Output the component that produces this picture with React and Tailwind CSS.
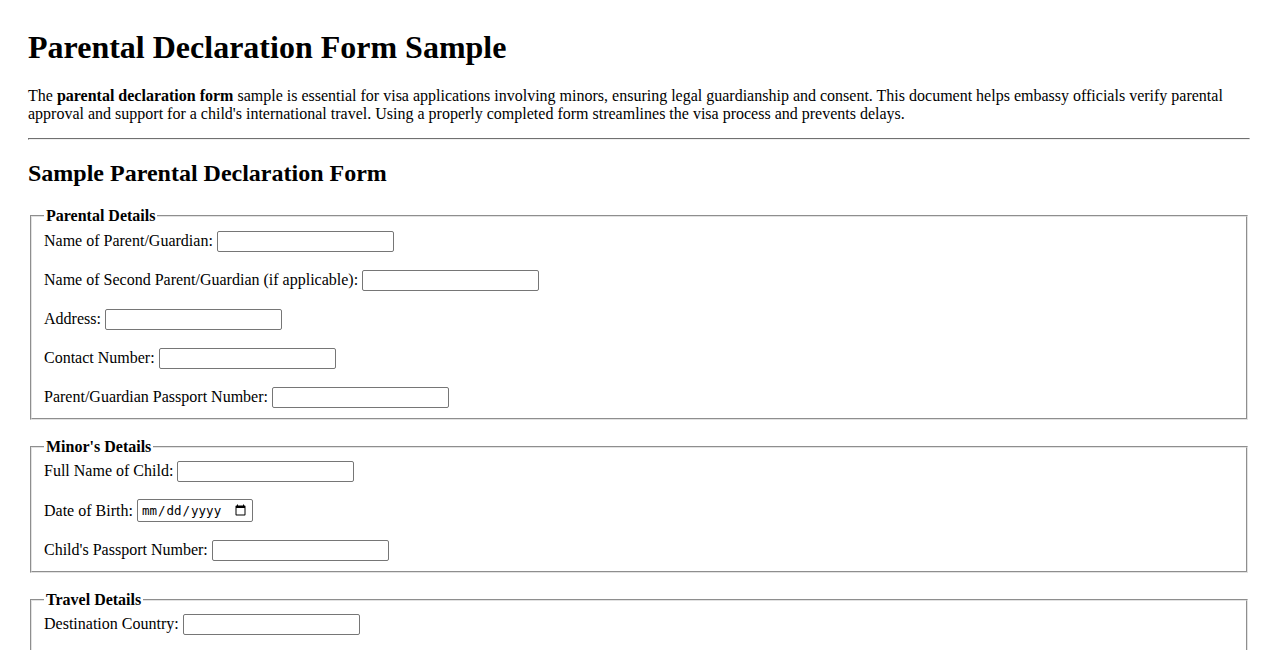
import React from 'react';

const Field = ({ label, type = 'text' }) => (
  <div className={`flex items-center gap-[4px] ${type === 'date' ? 'h-[23px]' : 'h-[22px]'}`}>
    <span>{label}</span>
    {type === 'date' ? (
      <input
        type="date"
        className="w-[116px] h-[23px] border border-[#767676] rounded-[2px] px-[3px] bg-white text-[12.5px] font-['DejaVu_Sans_Mono',monospace] text-black"
      />
    ) : (
      <input
        type={type}
        className="w-[177px] h-[21px] border border-[#767676] rounded-[2px] px-[2px] bg-white text-[13px]"
      />
    )}
  </div>
);

const Section = ({ title, fields, first = false }) => (
  <fieldset className="mx-[2px] border-2 [border-style:groove] border-[#e2e2e2] pt-[4px] px-[12px] pb-[10px]">
    <legend className="px-[2px] font-bold">{title}</legend>
    <div className={`flex flex-col gap-[17px] ${first ? 'pt-[1px]' : ''}`}>
      {fields.map((f) => (
        <Field key={f.label} label={f.label} type={f.type} />
      ))}
    </div>
  </fieldset>
);

const App = () => {
  return (
    <div className="min-h-screen bg-white text-black text-[16px] leading-[normal] font-['Liberation_Serif',serif] px-[28px] pt-[8px] pb-[40px]">
      {/* Page header */}
      <h1 className="mt-[21px] mb-[20px] text-[32px] font-bold">Parental Declaration Form Sample</h1>
      <p className="pt-[1px] mb-[15px] leading-[18px]">
        The <strong className="font-bold">parental declaration form</strong> sample is essential for visa applications
        involving minors, ensuring legal guardianship and consent. This document helps embassy officials verify parental
        approval and support for a child's international travel. Using a properly completed form streamlines the visa
        process and prevents delays.
      </p>
      <hr className="h-0 border [border-style:inset] border-[#c4c4c4] border-b-[#f0f0f0] border-r-[#f0f0f0]" />

      <h2 className="mt-[20px] mb-[20px] text-[24px] font-bold">Sample Parental Declaration Form</h2>

      <form>
        <Section
          first
          title="Parental Details"
          fields={[
            { label: 'Name of Parent/Guardian:' },
            { label: 'Name of Second Parent/Guardian (if applicable):' },
            { label: 'Address:' },
            { label: 'Contact Number:' },
            { label: 'Parent/Guardian Passport Number:' },
          ]}
        />
        <div className="h-[18px]" />
        <Section
          title="Minor's Details"
          fields={[
            { label: 'Full Name of Child:' },
            { label: 'Date of Birth:', type: 'date' },
            { label: "Child's Passport Number:" },
          ]}
        />
        <div className="h-[18px]" />
        <Section
          title="Travel Details"
          fields={[
            { label: 'Destination Country:' },
            { label: 'Date of Departure:', type: 'date' },
            { label: 'Date of Return:', type: 'date' },
            { label: 'Accompanying Adult (if any):' },
          ]}
        />
      </form>
    </div>
  );
};

export default App;
